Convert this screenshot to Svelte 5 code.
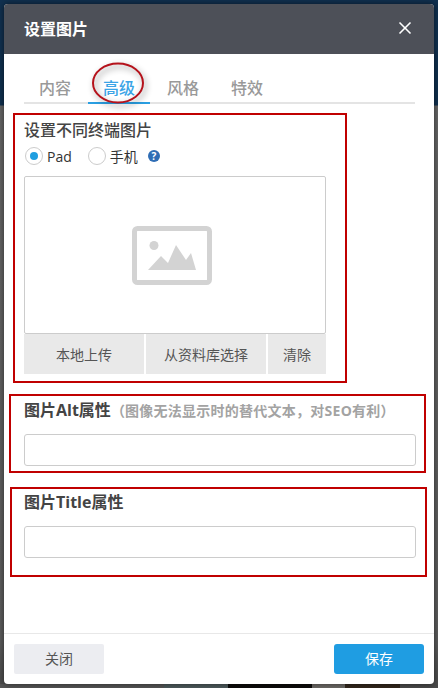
<script>
  // Image settings dialog, "advanced" tab. Red boxes are review annotations on top.
  const tabs = ['内容', '高级', '风格', '特效'];
  let active = $state(1);
  let device = $state('pad');
  let alt = $state('');
  let title = $state('');
</script>

<div class="page">
  <div class="dialog">
    <header class="head">
      <span class="head-title">设置图片</span>
      <button type="button" class="close" aria-label="关闭">
        <svg viewBox="0 0 14 14" width="14" height="14" fill="none" stroke="currentColor" stroke-width="1.6">
          <line x1="1.5" y1="1.5" x2="12.5" y2="12.5" />
          <line x1="12.5" y1="1.5" x2="1.5" y2="12.5" />
        </svg>
      </button>
    </header>

    <div class="body">
      <nav class="tabs">
        {#each tabs as t, i}
          <button type="button" class="tab" class:on={active === i} onclick={() => (active = i)}>{t}</button>
        {/each}
      </nav>

      <section class="device">
        <h3>设置不同终端图片</h3>
        <div class="radios">
          <button type="button" class="radio" onclick={() => (device = 'pad')}>
            <span class="dot" class:checked={device === 'pad'}></span>Pad
          </button>
          <button type="button" class="radio" onclick={() => (device = 'phone')}>
            <span class="dot" class:checked={device === 'phone'}></span>手机
          </button>
          <span class="help">?</span>
        </div>
        <div class="preview">
          <svg viewBox="0 0 80 59" width="80" height="59">
            <rect x="2.5" y="2.5" width="75" height="54" rx="3" fill="none" stroke="#d3d3d3" stroke-width="5" />
            <circle cx="22" cy="19.5" r="4.5" fill="#d3d3d3" />
            <path d="M16 44 L29 30 L36 37 L44 19 L54 34 L59 27 L64 44 Z" fill="#d3d3d3" />
          </svg>
        </div>
        <div class="actions">
          <button type="button" class="act wide">本地上传</button>
          <button type="button" class="act wide">从资料库选择</button>
          <button type="button" class="act">清除</button>
        </div>
      </section>

      <section class="field alt">
        <h3>图片Alt属性<small>（图像无法显示时的替代文本，对SEO有利）</small></h3>
        <input type="text" bind:value={alt} />
      </section>

      <section class="field ttl">
        <h3>图片Title属性</h3>
        <input type="text" bind:value={title} />
      </section>

      <span class="mark mark-1"></span>
      <span class="mark mark-2"></span>
      <span class="mark mark-3"></span>
      <svg class="ring" viewBox="0 0 64 52" width="64" height="52" aria-hidden="true">
        <ellipse cx="27" cy="21" rx="25" ry="19.5" fill="none" stroke="#b5121b" stroke-width="2" />
      </svg>
    </div>

    <footer class="foot">
      <button type="button" class="btn ghost">关闭</button>
      <button type="button" class="btn primary">保存</button>
    </footer>
  </div>
</div>

<style>
  :global(body) {
    margin: 0;
    font-family: "Open Sans", "Noto Sans CJK SC", sans-serif;
  }

  .page {
    height: 688px;
    padding: 4px;
    box-sizing: border-box;
    background:
      linear-gradient(90deg, #555 0 164px, #4d5a5c 164px 228px, #0c0b0a 228px 312px, #6d6a66 312px 345px, #33271d 345px 400px, #4a4a4a 400px) bottom / 100% 4px no-repeat,
      linear-gradient(#10304f 0, #10304f 105px, #666 106px, #5c5c5c 640px, #4a4a4a 688px);
  }

  .dialog {
    height: 680px;
    display: flex;
    flex-direction: column;
    background: #fff;
    border-radius: 4px;
    overflow: hidden;
    box-shadow: 0 0 6px rgba(0, 0, 0, 0.55);
  }

  .head {
    flex: none;
    height: 50px;
    padding: 0 20px 2px;
    box-sizing: border-box;
    display: flex;
    align-items: center;
    justify-content: space-between;
    background: #4d5058;
    color: #fff;
  }
  .head-title {
    font-size: 16px;
    font-weight: 700;
  }
  .close {
    padding: 0;
    margin-right: 2px;
    display: flex;
    background: none;
    border: none;
    color: #fff;
  }

  .body {
    position: relative;
    flex: 1;
    padding: 0 18px 0 20px;
  }

  .tabs {
    height: 50px;
    margin-right: 1px;
    box-sizing: border-box;
    display: flex;
    gap: 2px;
    align-items: flex-end;
    border-bottom: 2px solid #e4e4e4;
  }
  .tab {
    width: 62px;
    height: 34px;
    margin-bottom: -2px;
    padding: 2px 0 0;
    background: none;
    border: none;
    border-bottom: 2px solid transparent;
    font: inherit;
    font-size: 16px;
    font-weight: 500;
    color: #999;
  }
  .tab.on {
    color: #3ba4e6;
    border-bottom-color: #2a9fe2;
  }

  h3 {
    margin: 0;
    font-size: 16px;
    line-height: 24px;
    color: #444;
  }
  h3 small {
    font-size: 14px;
    letter-spacing: 0.25px;
    color: #a3a3a3;
    font-weight: 700;
  }

  .device {
    width: 302px;
    padding-top: 14px;
  }
  .device h3 {
    font-weight: 500;
  }

  .radios {
    margin-top: 3px;
    height: 22px;
    display: flex;
    align-items: center;
    gap: 15px;
  }
  .radio {
    padding: 0 0 0 1px;
    display: flex;
    align-items: center;
    gap: 4px;
    background: none;
    border: none;
    font: inherit;
    font-size: 14px;
    color: #333;
  }
  .dot {
    width: 18px;
    height: 18px;
    box-sizing: border-box;
    display: flex;
    align-items: center;
    justify-content: center;
    border: 1px solid #ccc;
    border-radius: 50%;
  }
  .dot.checked::after {
    content: '';
    width: 8px;
    height: 8px;
    border-radius: 50%;
    background: #1f9ee0;
  }
  .help {
    width: 12px;
    height: 12px;
    margin-left: -5px;
    display: flex;
    align-items: center;
    justify-content: center;
    border-radius: 50%;
    background: #2f6db5;
    color: #fff;
    font-size: 10px;
    font-weight: 700;
  }

  .preview {
    height: 158px;
    margin-top: 9px;
    padding: 0 6px 0 0;
    box-sizing: border-box;
    display: flex;
    align-items: center;
    justify-content: center;
    border: 1px solid #ccc;
    border-radius: 2px;
  }

  .actions {
    display: flex;
    gap: 2px;
  }
  .act {
    flex: 58 0 58px;
    height: 40px;
    padding: 0;
    background: #e9e9e9;
    border: none;
    font: inherit;
    font-size: 14px;
    color: #555;
  }
  .act.wide {
    flex: 0 0 120px;
  }

  .field input {
    display: block;
    width: 100%;
    height: 32px;
    margin-top: 11px;
    box-sizing: border-box;
    border: 1px solid #ccc;
    border-radius: 3px;
    background: #fff;
  }
  .field h3 {
    font-weight: 700;
  }
  .alt {
    padding-top: 24px;
  }
  .ttl {
    padding-top: 24px;
  }
  .ttl input {
    margin-top: 12px;
  }

  .foot {
    flex: none;
    height: 51px;
    padding: 10px;
    box-sizing: border-box;
    display: flex;
    justify-content: space-between;
    border-top: 1px solid #e8e8e8;
  }
  .btn {
    width: 90px;
    height: 30px;
    padding: 0 0 2px;
    border: none;
    border-radius: 2px;
    font: inherit;
    font-size: 14px;
  }
  .ghost {
    background: #ecedf1;
    color: #555;
  }
  .primary {
    background: #1f9de2;
    color: #fff;
    border-radius: 3px;
  }

  /* annotations drawn over the form */
  .mark {
    position: absolute;
    box-sizing: border-box;
    border: 2px solid #c00000;
    pointer-events: none;
  }
  .mark-1 { left: 9px; top: 59px; width: 334px; height: 270px; }
  .mark-2 { left: 5px; top: 340px; width: 417px; height: 79px; }
  .mark-3 { left: 6px; top: 433px; width: 417px; height: 90px; }

  .ring {
    position: absolute;
    left: 87px;
    top: 8px;
    filter: drop-shadow(2px 3px 3px rgba(0, 0, 0, 0.45));
    pointer-events: none;
  }
</style>
